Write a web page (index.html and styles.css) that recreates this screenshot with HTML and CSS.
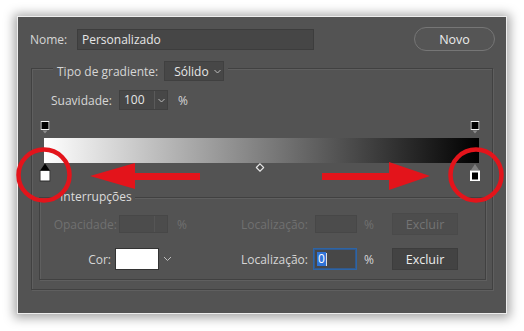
FILE: index.html
```html
<!DOCTYPE html>
<html lang="pt">
<head>
<meta charset="utf-8">
<title>Editor de gradiente</title>
<link rel="stylesheet" href="styles.css">
</head>
<body>
<div class="dialog">
  <div class="top-row">
    <span class="name-label">Nome:</span>
    <div class="name-input">Personalizado</div>
    <button class="btn-novo">Novo</button>
  </div>

  <fieldset class="group outer">
    <legend class="legend-type">
      <span class="legend-inner">
        <span>Tipo de gradiente:</span>
        <span class="select">Sólido <svg class="chev" width="7" height="5" viewBox="0 0 7 5"><polyline points="0.5,1 3.5,4 6.5,1" fill="none" stroke="#bdbdbd" stroke-width="1"/></svg></span>
      </span>
    </legend>

    <div class="smooth-row">
      <span class="smooth-label">Suavidade:</span>
      <span class="combo">
        <span class="combo-val">100</span>
        <span class="combo-btn"><svg width="7" height="5" viewBox="0 0 7 5"><polyline points="0.5,1 3.5,4 6.5,1" fill="none" stroke="#bdbdbd" stroke-width="1"/></svg></span>
      </span>
      <span class="pct">%</span>
    </div>

    <div class="grad-editor">
      <div class="stops-top">
        <div class="track">
          <svg class="stop-top" style="left:0%" width="9" height="13" viewBox="0 0 9 13"><rect x="0.5" y="0.5" width="8" height="8" fill="#000" stroke="#f2f2f2"/><polygon points="2,9.5 7,9.5 4.5,12.5" fill="#8c8c8c"/></svg>
          <svg class="stop-top" style="left:100%" width="9" height="13" viewBox="0 0 9 13"><rect x="0.5" y="0.5" width="8" height="8" fill="#000" stroke="#f2f2f2"/><polygon points="2,9.5 7,9.5 4.5,12.5" fill="#8c8c8c"/></svg>
        </div>
      </div>
      <div class="bar"></div>
      <div class="stops-bottom">
        <div class="track">
          <svg class="stop-bottom" style="left:0%" width="11" height="19" viewBox="0 0 11 19"><polygon points="5.5,0.5 10,7 1,7" fill="#000"/><rect x="0.5" y="7.5" width="10" height="10.5" fill="#fff" stroke="#2a2a2a"/></svg>
          <svg class="midpoint" style="left:50%" width="9" height="9" viewBox="0 0 9 9"><polygon points="4.5,0.8 8.2,4.5 4.5,8.2 0.8,4.5" fill="#4a4a4a" stroke="#e6e6e6" stroke-width="1.2"/></svg>
          <svg class="stop-bottom" style="left:100%" width="11" height="19" viewBox="0 0 11 19"><polygon points="5.5,1 9.5,7 1.5,7" fill="#7f7f7f"/><rect x="0.5" y="7.5" width="10" height="10.5" fill="#fff"/><rect x="2.5" y="9.5" width="6" height="7" fill="#000"/></svg>
        </div>
      </div>
    </div>

    <fieldset class="group inner">
      <legend class="legend-stops">Interrupções</legend>

      <div class="stop-row first disabled">
        <div class="half left">
          <span class="lbl lbl-op">Opacidade:</span>
          <span class="combo small">
            <span class="combo-val"></span>
            <span class="combo-btn"></span>
          </span>
          <span class="pct pct-left">%</span>
        </div>
        <div class="half right">
          <span class="lbl lbl-loc">Localização:</span>
          <span class="field"></span>
          <span class="pct pct-right">%</span>
          <button class="btn-excluir">Excluir</button>
        </div>
      </div>

      <div class="stop-row second">
        <div class="half left">
          <span class="lbl lbl-cor">Cor:</span>
          <span class="swatch"></span>
          <svg class="swatch-chev" width="9" height="6" viewBox="0 0 9 6"><polyline points="1,1 4.5,4.5 8,1" fill="none" stroke="#bdbdbd" stroke-width="1"/></svg>
        </div>
        <div class="half right">
          <span class="lbl lbl-loc">Localização:</span>
          <span class="field focus"><span class="sel">0</span><span class="caret"></span></span>
          <span class="pct pct-right">%</span>
          <button class="btn-excluir">Excluir</button>
        </div>
      </div>
    </fieldset>
  </fieldset>
</div>

<svg class="annot" width="524" height="331" viewBox="0 0 524 331">
  <circle cx="44" cy="175" r="25.5" fill="none" stroke="#e3141b" stroke-width="4.5"/>
  <circle cx="476" cy="175" r="25.5" fill="none" stroke="#e3141b" stroke-width="4.5"/>
  <polygon points="90,176 135,163 135,173 200,173 200,180 135,180 135,189" fill="#e3141b"/>
  <polygon points="430,176 389,162 389,173 322,173 322,180 389,180 389,190" fill="#e3141b"/>
</svg>
</body>
</html>
```

FILE: styles.css
```css
* {
  box-sizing: border-box;
}

html, body {
  margin: 0;
}

body {
  position: relative;
  width: 524px;
  height: 331px;
  overflow: hidden;
  padding: 16px 0 0 17px;
  background: #ffffff;
  font-family: "Open Sans", "Noto Sans", sans-serif;
  font-size: 12px;
  color: #d6d6d6;
}

.dialog {
  width: 490px;
  height: 298px;
  background: #535353;
  border: 1px solid #ededed;
  box-shadow: 0 1px 10px 3px rgba(0, 0, 0, 0.35);
  padding: 10px 11px 0 12px;
}

/* top row */
.top-row {
  display: flex;
  align-items: center;
  height: 24px;
}

.name-label {
  width: 47px;
}

.name-input {
  width: 237px;
  height: 21px;
  line-height: 19px;
  padding-left: 4px;
  background: #464646;
  border: 1px solid #3d3d3d;
  color: #e6e6e6;
}

.btn-novo {
  margin-left: auto;
  width: 81px;
  height: 24px;
  border: 1.5px solid #767676;
  border-radius: 12px;
  background: #555555;
  color: #ececec;
  font-family: inherit;
  font-size: 12.5px;
  padding: 0;
}

/* groups */
.group {
  margin: 0;
  padding: 0;
  min-inline-size: 0;
  border: 1px solid #414141;
  box-shadow: 1px 1px 0 #5f5f5f, inset 1px 1px 0 #5f5f5f;
}

.group legend {
  background: #535353;
}

.outer {
  width: 462px;
  margin: 4px 0 0 1px;
  padding-bottom: 9px;
}

.legend-type {
  margin-left: 21px;
  padding: 6px 4px 0 4px;
}

.legend-inner {
  display: flex;
  align-items: center;
  gap: 6px;
  height: 20px;
}

.select {
  display: flex;
  align-items: center;
  gap: 5px;
  width: 60px;
  height: 20px;
  padding-left: 9px;
  background: #474747;
  border: 1px solid #404040;
  color: #e6e6e6;
}

/* smoothness row */
.smooth-row {
  display: flex;
  align-items: center;
  height: 20px;
  margin-top: 9px;
  padding-left: 19px;
}

.smooth-label {
  width: 68px;
}

.combo {
  display: flex;
  width: 49px;
  height: 20px;
  background: #474747;
  border: 1px solid #404040;
}

.combo-val {
  width: 35px;
  padding-left: 4px;
  line-height: 18px;
  color: #e6e6e6;
  border-right: 1px solid #5a5a5a;
}

.combo-btn {
  flex: 1;
  display: flex;
  align-items: center;
  justify-content: center;
}

.pct {
  margin-left: 10px;
}

/* gradient editor */
.grad-editor {
  width: 435px;
  margin: 8px 0 0 12px;
}

.stops-top {
  position: relative;
  height: 20px;
}

.stops-bottom {
  position: relative;
  height: 22px;
}

.track {
  position: absolute;
  top: 0;
  bottom: 0;
  left: 1px;
  right: 4px;
}

.stop-top,
.stop-bottom,
.midpoint {
  position: absolute;
  display: block;
  transform: translateX(-50%);
}

.stop-top {
  top: 3px;
}

.stop-bottom {
  top: 0;
}

.midpoint {
  top: 0;
}

.bar {
  height: 25px;
  background: linear-gradient(to right, #ffffff 0%, #000000 100%);
}

/* stops group */
.inner {
  width: 447px;
  margin: 4px 0 0 7px;
  padding-bottom: 9px;
}

.legend-stops {
  margin-left: 17px;
  padding: 0 3px;
  line-height: 16px;
  color: #dcdcdc;
}

.stop-row {
  display: grid;
  grid-template-columns: 190px 1fr;
  height: 22px;
}

.stop-row.first {
  margin-top: 8px;
}

.stop-row.second {
  margin-top: 13px;
}

.half {
  display: flex;
  align-items: center;
}

.lbl {
  text-align: right;
  white-space: nowrap;
}

.lbl-op {
  width: 77px;
  margin-right: 2px;
}

.lbl-cor {
  width: 71px;
  margin-right: 4px;
}

.lbl-loc {
  width: 78px;
  margin-right: 7px;
}

.combo.small {
  height: 18px;
}

.pct-left {
  margin-left: 9px;
}

.pct-right {
  width: 28px;
  margin-left: 7px;
}

.field {
  display: flex;
  align-items: center;
  width: 42px;
  height: 18px;
  background: #4a4a4a;
  border: 1px solid #444444;
}

.field.focus {
  height: 22px;
  margin-left: -2px;
  width: 44px;
  background: #474747;
  border: 1px solid #2c64a6;
  box-shadow: inset 0 0 0 1px #33598a;
  padding-left: 3px;
}

.sel {
  background: #2f73d6;
  color: #ffffff;
  line-height: 14px;
  padding: 0 1px;
}

.caret {
  width: 1px;
  height: 13px;
  background: #e0e0e0;
}

.swatch {
  width: 44px;
  height: 22px;
  background: #ffffff;
  border: 1px solid #333333;
}

.swatch-chev {
  margin-left: 4px;
}

.btn-excluir {
  width: 66px;
  height: 22px;
  padding: 0;
  background: #434343;
  border: 1px solid #3d3d3d;
  color: #ececec;
  font-family: inherit;
  font-size: 12.5px;
}

/* disabled row */
.disabled {
  color: #707070;
}

.disabled .combo,
.disabled .field {
  background: #4c4c4c;
  border-color: #474747;
}

.disabled .combo-val {
  border-right-color: #555555;
}

.disabled .btn-excluir {
  background: #4d4d4d;
  border-color: #4a4a4a;
  color: #747474;
}

/* annotation overlay */
.annot {
  position: absolute;
  left: 0;
  top: 0;
  pointer-events: none;
}
```
